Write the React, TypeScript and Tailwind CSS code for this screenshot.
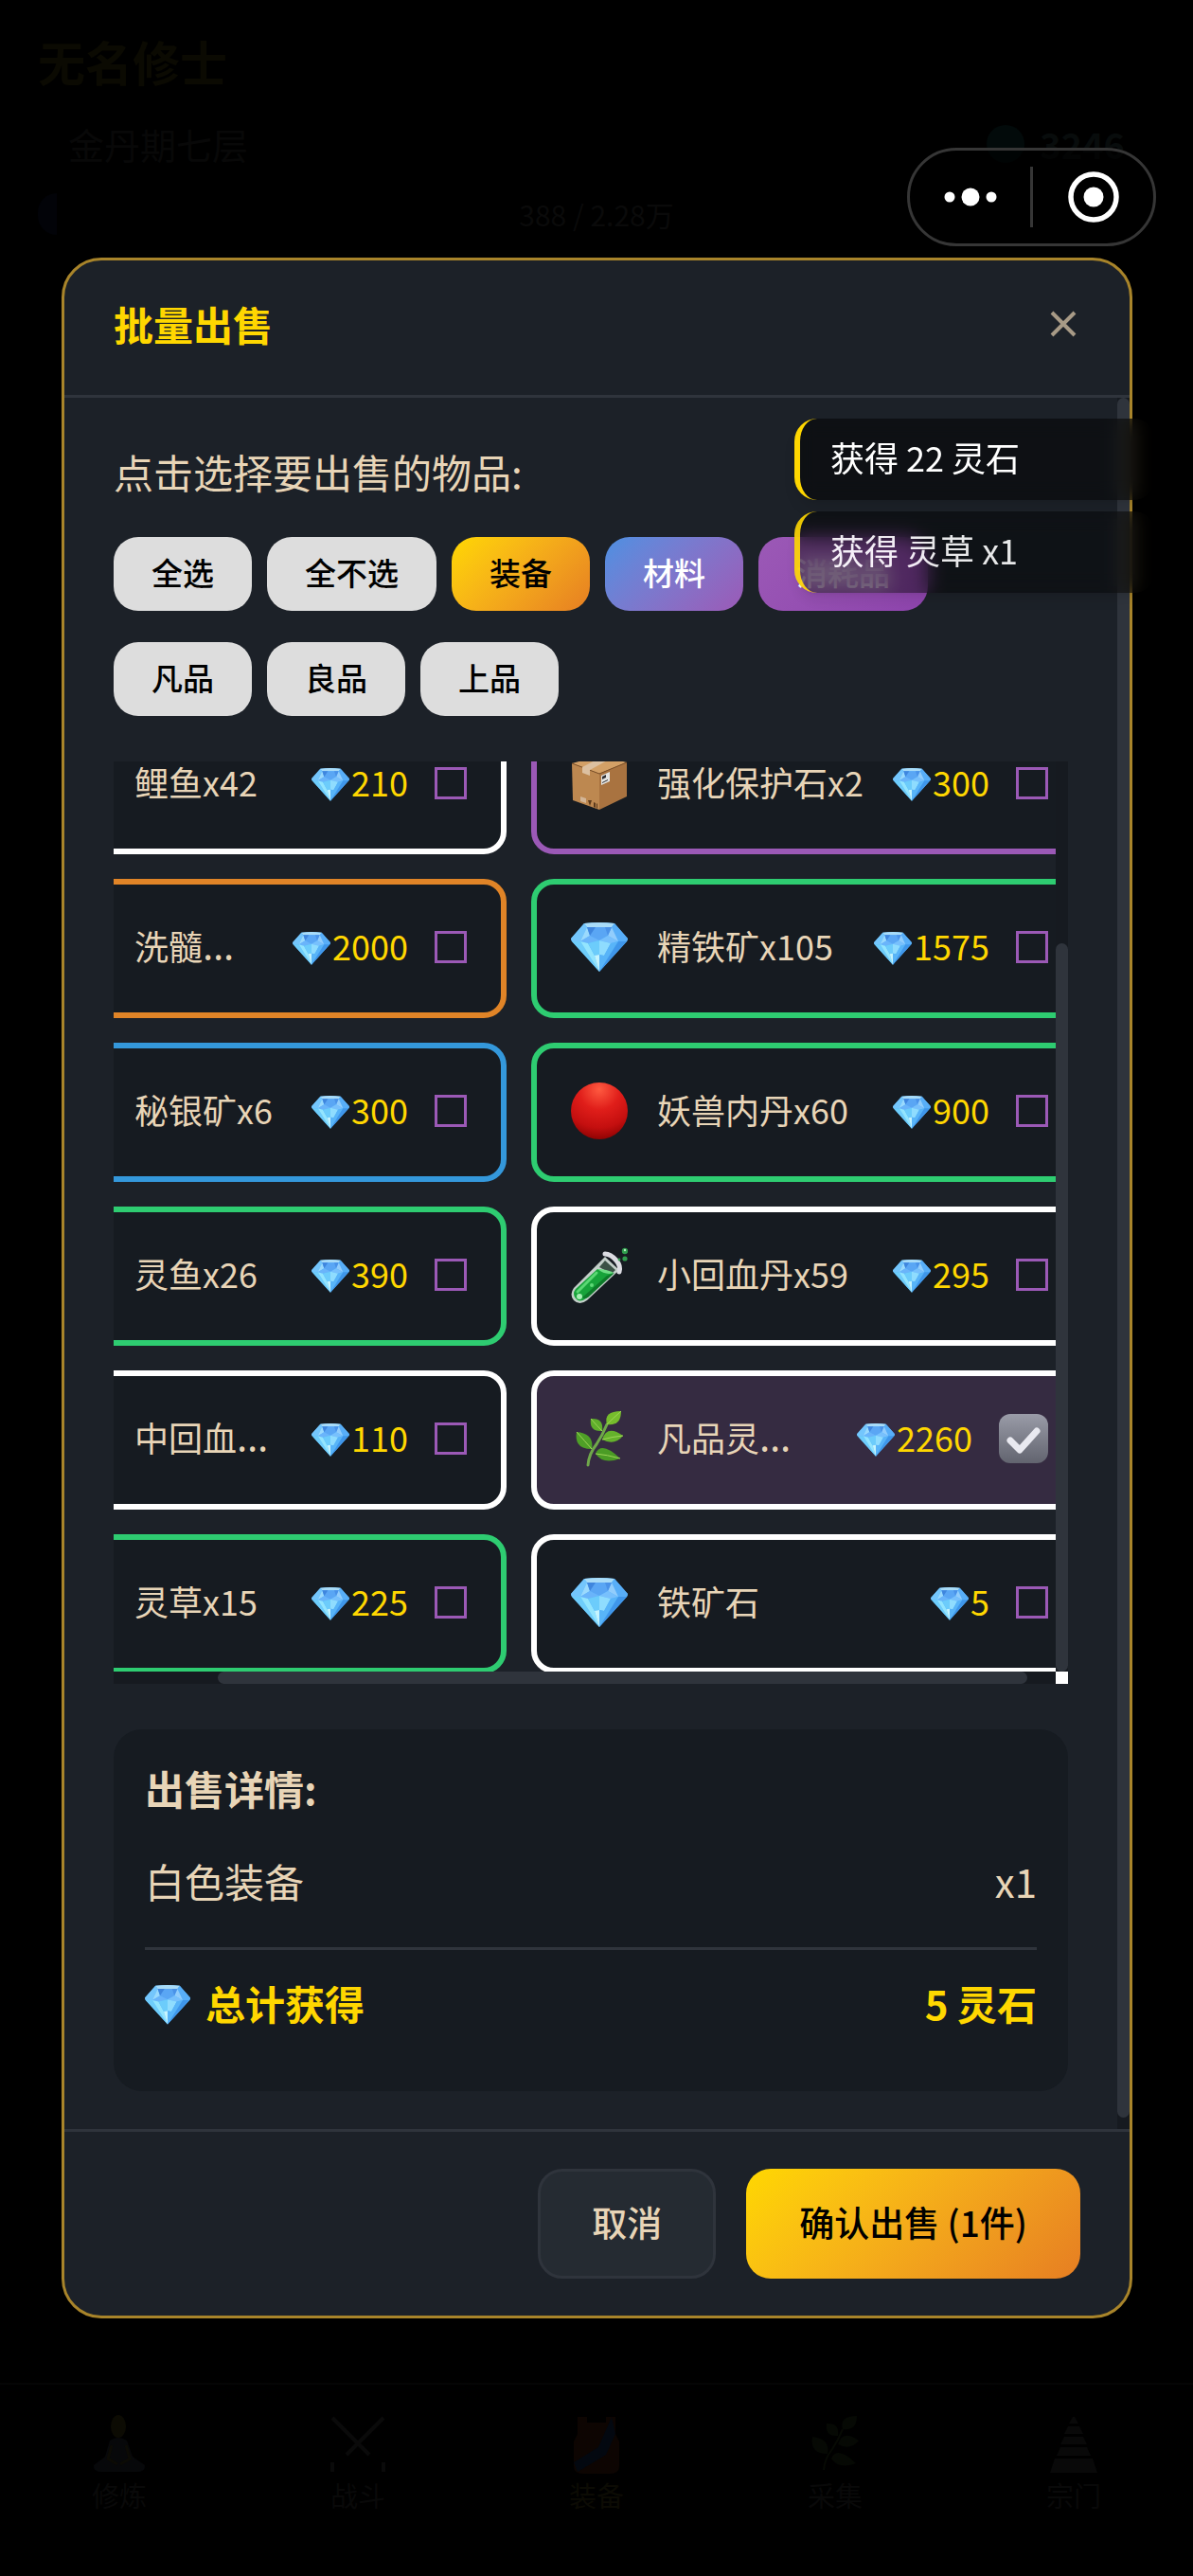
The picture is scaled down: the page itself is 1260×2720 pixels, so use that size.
import React, { useLayoutEffect, useRef, useState } from 'react';

type IconName = 'box' | 'gem' | 'ball' | 'tube' | 'herb' | 'none';

interface Item {
  id: number;
  name: string;
  price: number;
  icon: IconName;
  border: string;
  cut?: boolean;
}

const ITEMS: Item[] = [
  { id: 1, name: '鲤鱼x42', price: 210, icon: 'none', border: 'border-white' },
  { id: 2, name: '强化保护石x2', price: 300, icon: 'box', border: 'border-[#9b59b6]' },
  { id: 3, name: '洗髓', price: 2000, icon: 'none', border: 'border-[#e08427]', cut: true },
  { id: 4, name: '精铁矿x105', price: 1575, icon: 'gem', border: 'border-[#2ecc71]' },
  { id: 5, name: '秘银矿x6', price: 300, icon: 'none', border: 'border-[#3498db]' },
  { id: 6, name: '妖兽内丹x60', price: 900, icon: 'ball', border: 'border-[#2ecc71]' },
  { id: 7, name: '灵鱼x26', price: 390, icon: 'none', border: 'border-[#2ecc71]' },
  { id: 8, name: '小回血丹x59', price: 295, icon: 'tube', border: 'border-white' },
  { id: 9, name: '中回血', price: 110, icon: 'none', border: 'border-white', cut: true },
  { id: 10, name: '凡品灵', price: 2260, icon: 'herb', border: 'border-white', cut: true },
  { id: 11, name: '灵草x15', price: 225, icon: 'none', border: 'border-[#2ecc71]' },
  { id: 12, name: '铁矿石', price: 5, icon: 'gem', border: 'border-white' },
];

const FILTERS = [
  { label: '全选', style: 'bg-[#dddddd] text-black' },
  { label: '全不选', style: 'bg-[#dddddd] text-black' },
  { label: '装备', style: 'bg-linear-135 from-[#ffd700] to-[#e67e22] text-black' },
  { label: '材料', style: 'bg-linear-135 from-[#4a90e2] to-[#9b59b6] text-white' },
  { label: '消耗品', style: 'bg-linear-135 from-[#9b59b6] to-[#8e44ad] text-white' },
  { label: '凡品', style: 'bg-[#dddddd] text-black' },
  { label: '良品', style: 'bg-[#dddddd] text-black' },
  { label: '上品', style: 'bg-[#dddddd] text-black' },
];

const Gem: React.FC<{ className?: string }> = ({ className }) => (
  <svg viewBox="0 0 60 52" className={className} aria-hidden="true">
    <path d="M14 1Q30 -1 46 1L60 17Q60 19 59 20L30 52L1 20Q0 19 0 17Z" fill="#56b4fb" />
    <path d="M14 1Q30 -1 46 1L43 5H17Z" fill="#a9dcf8" />
    <path d="M14 1L17 5L10 20L1 20L0 17Z" fill="#74c6fc" />
    <path d="M46 1L43 5L50 20L59 20L60 17Z" fill="#58aef8" />
    <path d="M17 5H43L39 14L30 19L20 14Z" fill="#5aa6f4" />
    <path d="M17 5L20 14L10 20Z" fill="#9bdafd" />
    <path d="M17 5H26L20 14Z" fill="#3f86de" />
    <path d="M43 5L39 14L50 20Z" fill="#92cdfc" />
    <path d="M43 5H36L39 14Z" fill="#4a92e8" />
    <path d="M20 14L30 19L18 22L10 20Z" fill="#6ab4fa" />
    <path d="M39 14L30 19L42 22L50 20Z" fill="#78c0fc" />
    <path d="M1 20L10 20L30 52Z" fill="#6ecdfb" />
    <path d="M10 20L18 22L25 35L30 52Z" fill="#93e5fe" />
    <path d="M18 22L30 19L30 34L25 35Z" fill="#6cccfb" />
    <path d="M30 19L42 22L35 35L30 34Z" fill="#8fdcfe" />
    <path d="M25 35L30 34V52Z" fill="#c5f4fe" />
    <path d="M30 34L35 35L42 22L50 20L30 52Z" fill="#58b4f8" />
    <path d="M59 20L50 20L30 52Z" fill="#3f96ea" />
  </svg>
);

const Herb: React.FC<{ className?: string }> = ({ className }) => (
  <svg viewBox="0 0 60 60" className={className} aria-hidden="true">
    <path d="M18 58Q19 46 27 36Q33 27 38 15" fill="none" stroke="#6fa84a" strokeWidth="3" strokeLinecap="round" />
    <path d="M38 15Q34 1 53 1Q53 17 38 15Z" fill="#76bd2c" />
    <path d="M33 22Q19 23 21 9Q35 8 33 22Z" fill="#5fae2b" />
    <path d="M33 31Q38 15 55 27Q46 38 33 31Z" fill="#65b22c" />
    <path d="M22 41Q3 41 6 23Q25 25 22 41Z" fill="#4fa027" />
    <path d="M26 46Q32 32 52 51Q34 58 26 46Z" fill="#4b9c25" />
    <path d="M38 15Q44 9 53 1M33 22Q28 17 21 9M33 31Q44 28 55 27M22 41Q15 33 6 23M26 46Q38 47 52 51" fill="none" stroke="#9fd558" strokeWidth="1" />
  </svg>
);

const ItemIcon: React.FC<{ name: IconName }> = ({ name }) => {
  if (name === 'gem') return <Gem className="w-[60px]" />;
  if (name === 'herb') return <Herb className="w-[60px]" />;
  if (name === 'ball') {
    return (
      <svg viewBox="0 0 60 60" className="w-[60px]" aria-hidden="true">
        <defs>
          <radialGradient id="ball" cx="50%" cy="12%" r="90%">
            <stop offset="0" stopColor="#ff5a40" />
            <stop offset="0.4" stopColor="#e01e1a" />
            <stop offset="0.75" stopColor="#c40f0f" />
            <stop offset="1" stopColor="#8c0202" />
          </radialGradient>
        </defs>
        <circle cx="30" cy="30" r="30" fill="url(#ball)" />
      </svg>
    );
  }
  if (name === 'box') {
    return (
      <svg viewBox="0 0 60 60" className="w-[60px]" aria-hidden="true">
        <path d="M1 9L30 20V58L2 48Z" fill="#bd8850" />
        <path d="M1 9L31 1L59 8L30 20Z" fill="#d3a066" />
        <path d="M30 20L59 8V44L30 58Z" fill="#a97340" />
        <path d="M1 9L30 20L59 8" fill="none" stroke="#7d5028" strokeWidth="1" />
        <path d="M12 13L33 2L42 4L20 16V22L12 19Z" fill="#dcc0a0" />
        <path d="M32 22L41 18V28L32 32Z" fill="#e4e4e2" />
        <path d="M33 23L37 21V24L33 26ZM33 29L39 26V27L33 30Z" fill="#2f2f33" />
        <path d="M10 44L16 46V51L10 49Z" fill="#d3b596" />
        <path d="M18 48H22L20 54ZM24 50L26 51V56L24 55ZM27 51L28 52V57L27 56Z" fill="#5c3a1c" />
      </svg>
    );
  }
  if (name === 'tube') {
    return (
      <svg viewBox="0 0 60 60" className="w-[60px]" aria-hidden="true">
        <path d="M36 11L51 25L17 57Q9 63 3 57Q-2 51 3 44Z" fill="#c3cfc9" />
        <path d="M36 15L47 25L43 29L30 22Z" fill="#3a5145" />
        <path d="M28 24L45 28L16 55Q9 60 5 55Q1 50 5 45Z" fill="#17a33a" />
        <path d="M28 24Q38 24 45 28Q37 31 28 24Z" fill="#6fdc84" />
        <path d="M38 31L46 28L18 54Q14 56 12 54Z" fill="#0c7a28" />
        <path d="M7 48L27 28" stroke="#59d873" strokeWidth="3" strokeLinecap="round" />
        <path d="M36 8Q42 8 48 15Q53 21 51 27" fill="none" stroke="#dcdce2" strokeWidth="5" strokeLinecap="round" />
        <circle cx="9" cy="53" r="3" fill="#a5efb2" />
        <circle cx="22" cy="41" r="2" fill="#5fd877" />
        <circle cx="57" cy="5" r="3.2" fill="#2f9d4c" />
        <circle cx="57" cy="13" r="2.6" fill="#2f9d4c" />
        <circle cx="51" cy="14" r="1.4" fill="#2f9d4c" />
        <circle cx="57" cy="4" r="1.2" fill="#b9f0c4" />
      </svg>
    );
  }
  return null;
};

const ItemCard: React.FC<{ item: Item; checked: boolean; onToggle: () => void }> = ({ item, checked, onToggle }) => (
  <label
    className={`flex items-center min-h-[147px] px-9 pb-1 border-[6px] rounded-3xl cursor-pointer ${item.border} ${checked ? 'bg-[#352b41]' : 'bg-[#161b21]'}`}
  >
    <span className="w-[60px] mr-[31px] shrink-0">
      <ItemIcon name={item.icon} />
    </span>
    <span className="flex-1 pb-1 text-[36px] text-[#e8d5b7] whitespace-nowrap">
      {item.name}
      {item.cut && <span className="font-['Noto_Sans'] text-[42px] leading-none">…</span>}
    </span>
    <span className="flex items-center gap-0.5 mr-7 text-[36px] text-[#ffd700]">
      <Gem className="w-10 mt-1" />
      <span className="pb-1">{item.price}</span>
    </span>
    {checked ? (
      <span className="relative w-[52px] h-[52px]">
        <input
          type="checkbox"
          checked
          onChange={onToggle}
          className="appearance-none block w-full h-full rounded-xl bg-linear-to-b from-[#9a9ca8] to-[#62646f]"
        />
        <svg viewBox="0 0 52 52" className="absolute inset-0 pointer-events-none" aria-hidden="true">
          <path d="M12 28L22 38L40 18" fill="none" stroke="#e9e9f0" strokeWidth="7" strokeLinecap="round" strokeLinejoin="round" />
        </svg>
      </span>
    ) : (
      <input
        type="checkbox"
        checked={false}
        onChange={onToggle}
        className="appearance-none w-[34px] h-[34px] border-3 border-[#9b59b6]"
      />
    )}
  </label>
);

const NAV = [
  { label: '修炼', color: 'text-[#090909]' },
  { label: '战斗', color: 'text-[#090909]' },
  { label: '装备', color: 'text-[#0c0b04]' },
  { label: '采集', color: 'text-[#090909]' },
  { label: '宗门', color: 'text-[#090909]' },
];

const NavIcon: React.FC<{ index: number }> = ({ index }) => (
  <svg viewBox="0 0 60 62" className="w-[60px]" aria-hidden="true">
    {index === 0 && (
      <>
        <ellipse cx="29" cy="12" rx="8" ry="12" fill="#0c0b03" />
        <path d="M20 27Q29 21 38 27L44 44L57 53Q58 61 46 60H14Q2 61 3 53L15 44Z" fill="#07080a" />
        <path d="M22 32L18 46L28 52M37 32L41 46L31 52" fill="none" stroke="#0c0b05" strokeWidth="3" />
      </>
    )}
    {index === 1 && (
      <path d="M3 3L42 42M57 3L18 42M3 50V60M57 50V60" stroke="#0a0a0a" strokeWidth="4" />
    )}
    {index === 2 && (
      <>
        <path d="M10 2H20V8H40V2H50V20L54 28V54Q54 62 44 62H16Q6 62 6 54V28L10 20Z" fill="#0d0502" />
        <path d="M46 2L50 20L40 42L10 60L6 50L32 34Z" fill="#030810" />
      </>
    )}
    {index === 3 && (
      <>
        <path d="M18 58Q19 46 27 36Q33 27 38 15" fill="none" stroke="#070a04" strokeWidth="2" />
        <path d="M38 15Q34 1 53 1Q53 17 38 15ZM33 22Q19 23 21 9Q35 8 33 22ZM33 31Q38 15 55 27Q46 38 33 31ZM22 41Q3 41 6 23Q25 25 22 41ZM26 46Q32 32 52 51Q34 58 26 46Z" fill="#060904" />
      </>
    )}
    {index === 4 && (
      <path d="M29 2H31L35 9H25ZM24 12H36L40 20H20ZM20 23H40L44 31H16ZM16 34H44L48 43H12ZM10 46H50L55 61H5Z" fill="#090909" />
    )}
  </svg>
);

export default function App() {
  const [selected, setSelected] = useState<number[]>([10]);
  const listRef = useRef<HTMLDivElement>(null);

  useLayoutEffect(() => {
    listRef.current?.scrollTo(111, 49);
  }, []);

  const toggle = (id: number) => {
    setSelected(prev => (prev.includes(id) ? prev.filter(i => i !== id) : [...prev, id]));
  };

  return (
    <div className="relative min-h-screen bg-black font-['Noto_Sans_CJK_SC',sans-serif] overflow-hidden">
      {/* 底层页面 */}
      <div className="min-h-screen flex flex-col justify-between">
        <header className="px-10 pt-8">
          <h1 className="text-[50px] leading-[64px] font-bold text-[#0b0a02]">无名修士</h1>
          <div className="flex justify-between items-center mt-7 px-8 text-[38px] leading-[56px] text-[#080808]">
            <span>金丹期七层</span>
            <span className="flex items-center gap-4 font-bold text-[#080c0c]">
              <span className="w-10 h-10 rounded-full bg-[#020a0a]" />
              3246
            </span>
          </div>
          <div className="flex items-center mt-6 h-11">
            <span className="w-5 h-11 rounded-l-full bg-[#020308]" />
            <span className="flex-1 pr-5 text-center text-[30px] text-[#0a0a0a]">388 / 2.28万</span>
          </div>
        </header>
        <nav className="grid grid-cols-5 h-[204px] pt-8 border-t-2 border-[#050505]">
          {NAV.map((n, i) => (
            <a key={n.label} href="#" className={`flex flex-col items-center text-[29px] leading-[44px] ${n.color}`}>
              <NavIcon index={i} />
              {n.label}
            </a>
          ))}
        </nav>
      </div>

      {/* 批量出售弹窗 */}
      <div className="absolute inset-0 flex items-center pl-[65px] pr-16">
        <div className="flex flex-col w-full h-[80vh] border-3 border-[#a8842a] rounded-[42px] bg-[#1c2128] overflow-hidden">
          <div className="flex justify-between items-center px-[52px] pt-9 pb-11 border-b-3 border-[#2f343c]">
            <h2 className="text-[42px] leading-[62px] font-bold text-[#ffd700]">批量出售</h2>
            <button type="button" aria-label="关闭" className="p-1 text-[#a79a86]">
              <svg viewBox="0 0 28 28" className="w-7" aria-hidden="true">
                <path d="M2 2L26 26M26 2L2 26" stroke="currentColor" strokeWidth="4" />
              </svg>
            </button>
          </div>

          <div className="flex flex-1 min-h-0">
            <div className="flex flex-col flex-1 min-w-0 px-[52px] pt-12 pb-10">
              <p className="text-[42px] leading-[60px] text-[#e8d5b7]">点击选择要出售的物品:</p>
              <div className="flex flex-wrap gap-x-4 gap-y-[33px] mt-[39px]">
                {FILTERS.map(f => (
                  <button
                    key={f.label}
                    type="button"
                    className={`px-10 pt-[14px] pb-[18px] rounded-[26px] text-[33px] leading-[46px] font-medium ${f.style}`}
                  >
                    {f.label}
                  </button>
                ))}
              </div>

              <div className="flex flex-col flex-1 min-h-0 mt-12">
                <div className="flex flex-1 min-h-0">
                  <div ref={listRef} className="flex-1 min-w-0 overflow-auto [scrollbar-width:none]">
                    <div className="grid grid-cols-[526px_588px] gap-[26px] w-max">
                      {ITEMS.map(item => (
                        <ItemCard key={item.id} item={item} checked={selected.includes(item.id)} onToggle={() => toggle(item.id)} />
                      ))}
                    </div>
                  </div>
                  <div className="flex flex-col justify-end w-[13px] bg-[#161a20]">
                    <div className="h-4/5 rounded-full bg-[#2f343c]" />
                  </div>
                </div>
                <div className="flex h-[13px]">
                  <div className="flex-1 flex justify-center bg-[#161a20]">
                    <div className="w-[86%] ml-20 rounded-full bg-[#2f343c]" />
                  </div>
                  <div className="w-[13px] bg-white" />
                </div>
              </div>

              <div className="mt-12 px-[33px] pt-8 pb-[63px] rounded-[30px] bg-[#161b21] text-[42px] leading-[60px] text-[#e8d5b7]">
                <h3 className="font-bold">出售详情:</h3>
                <div className="flex justify-between pt-[38px] pb-10 border-b-3 border-[#2f343c]">
                  <span>白色装备</span>
                  <span>x1</span>
                </div>
                <div className="flex justify-between pt-[26px] font-bold text-[#ffd700]">
                  <span className="flex items-center gap-4">
                    <Gem className="w-12 mt-1" />
                    总计获得
                  </span>
                  <span>5 灵石</span>
                </div>
              </div>
            </div>
            <div className="w-[13px] pb-3 bg-[#161a20]">
              <div className="h-full rounded-full bg-[#2f343c]" />
            </div>
          </div>

          <div className="flex justify-end gap-8 px-[52px] py-[39px] border-t-3 border-[#2f343c] text-[37px] leading-[56px] font-medium">
            <button type="button" className="px-[54px] pt-[25px] pb-[29px] border-3 border-[#2f343c] rounded-[26px] bg-[#252b32] text-[#e8d5b7]">
              取消
            </button>
            <button type="button" className="px-14 pt-7 pb-8 rounded-[26px] bg-linear-135 from-[#ffd700] to-[#e67e22] text-black">
              确认出售 ({selected.length}件)
            </button>
          </div>
        </div>
      </div>

      {/* 获得提示 */}
      <div className="absolute top-[442px] right-[39px] w-[382px] flex flex-col gap-3 text-[36px] leading-[54px] text-white">
        <div className="pl-8 pt-[13px] pb-[19px] border-l-[6px] border-[#ffd700] rounded-3xl bg-black/50 backdrop-blur-[10px] shadow-lg">
          获得 22 灵石
        </div>
        <div className="pl-8 pt-[13px] pb-[19px] border-l-[6px] border-[#ffd700] rounded-3xl bg-black/50 backdrop-blur-[10px] shadow-lg opacity-90">
          获得 灵草 x1
        </div>
      </div>

      <div className="absolute top-[156px] right-[39px] w-[263px] h-[104px] flex items-center border-3 border-[#363636] rounded-full bg-black/60">
        <button type="button" aria-label="更多" className="flex-1 flex justify-center">
          <svg viewBox="0 0 56 20" className="w-14" aria-hidden="true" fill="#fff">
            <circle cx="6" cy="10" r="5.5" />
            <circle cx="28" cy="10" r="9.5" />
            <circle cx="50" cy="10" r="5.5" />
          </svg>
        </button>
        <span className="w-[3px] h-16 bg-[#363636]" />
        <button type="button" aria-label="退出" className="flex-1 flex justify-center">
          <svg viewBox="0 0 56 56" className="w-14" aria-hidden="true">
            <circle cx="28" cy="28" r="24" fill="none" stroke="#fff" strokeWidth="5.5" />
            <circle cx="28" cy="28" r="10.5" fill="#fff" />
          </svg>
        </button>
      </div>
    </div>
  );
}
